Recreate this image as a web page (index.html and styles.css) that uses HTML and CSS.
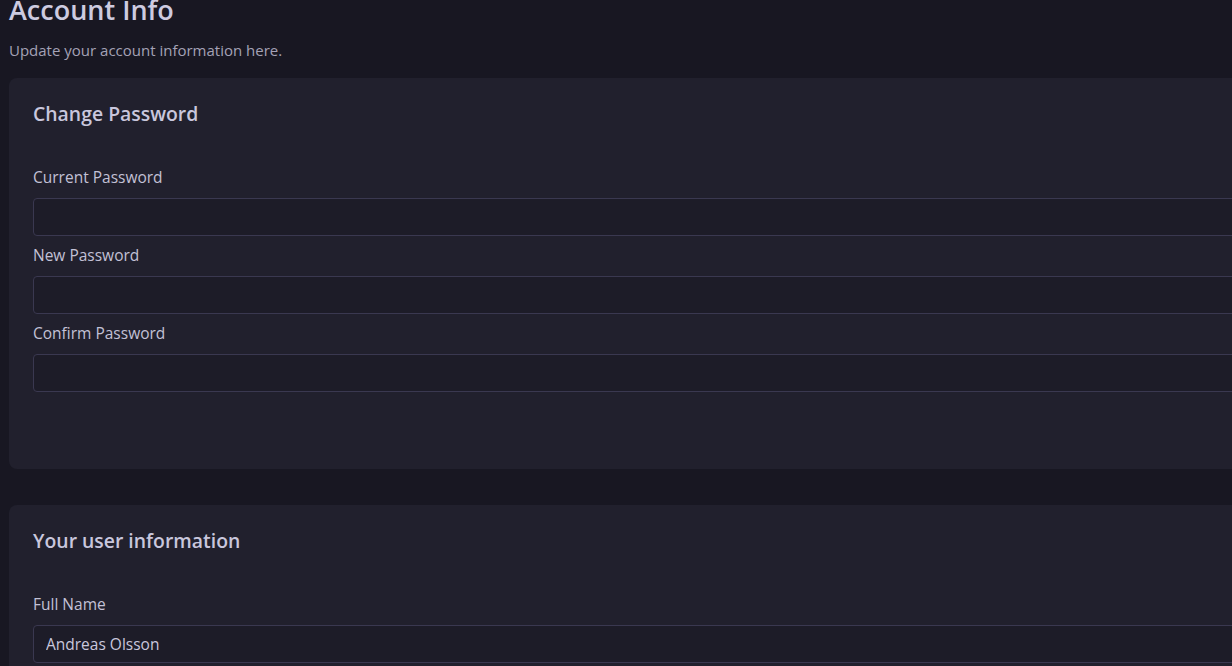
FILE: index.html
```html
<!DOCTYPE html>
<html lang="en">
<head>
    <meta charset="UTF-8">
    <meta name="viewport" content="width=device-width, initial-scale=1.0">
    <title>Account Info</title>
    <link rel="stylesheet" href="styles.css">
</head>
<body>
    <main class="page">
        <h1 class="title">Account Info</h1>
        <p class="subtitle">Update your account information here.</p>

        <section class="card">
            <h2 class="card-title">Change Password</h2>
            <form class="fields">
                <label class="field">
                    <span class="label">Current Password</span>
                    <input class="input" type="password">
                </label>
                <label class="field">
                    <span class="label">New Password</span>
                    <input class="input" type="password">
                </label>
                <label class="field">
                    <span class="label">Confirm Password</span>
                    <input class="input" type="password">
                </label>
            </form>
            <div class="card-foot"></div>
        </section>

        <section class="card">
            <h2 class="card-title">Your user information</h2>
            <form class="fields">
                <label class="field">
                    <span class="label">Full Name</span>
                    <input class="input" type="text" value="Andreas Olsson">
                </label>
            </form>
        </section>
    </main>
</body>
</html>
```

FILE: styles.css
```css
html, body {
    margin: 0;
    height: 100%;
    overflow: hidden;
}
body {
    background-color: #181722;
    font-family: "Open Sans", "Noto Sans", sans-serif;
    color: #c9c7dd;
}
.page {
    width: 1300px;
    padding: 0 0 0 9px;
}
.title {
    margin: -7px 0 0;
    font-size: 27px;
    line-height: 34px;
    font-weight: 600;
    color: #cdcbe0;
}
.subtitle {
    margin: 12px 0 0;
    font-size: 15px;
    line-height: 22px;
    color: #a4a2b6;
}
.card {
    margin-top: 17px;
    background-color: #21202d;
    border-radius: 8px;
    padding: 24px;
}
.card + .card {
    margin-top: 36px;
}
.card-title {
    margin: 0;
    font-size: 19.4px;
    line-height: 24px;
    font-weight: 600;
    color: #c9c7dd;
}
.fields {
    display: flex;
    flex-direction: column;
    gap: 9px;
    margin-top: 41px;
}
.field {
    display: flex;
    flex-direction: column;
    gap: 11px;
}
.label {
    font-size: 15.5px;
    line-height: 20px;
    color: #c3c1d6;
}
.input {
    box-sizing: border-box;
    height: 38px;
    width: 100%;
    margin: 0;
    padding: 0 12px;
    background-color: #1d1c28;
    border: 1px solid #3a3850;
    border-radius: 4px;
    font-family: inherit;
    font-size: 15.5px;
    color: #c9c7dd;
    outline: none;
}
.card-foot {
    height: 53px;
}
```
